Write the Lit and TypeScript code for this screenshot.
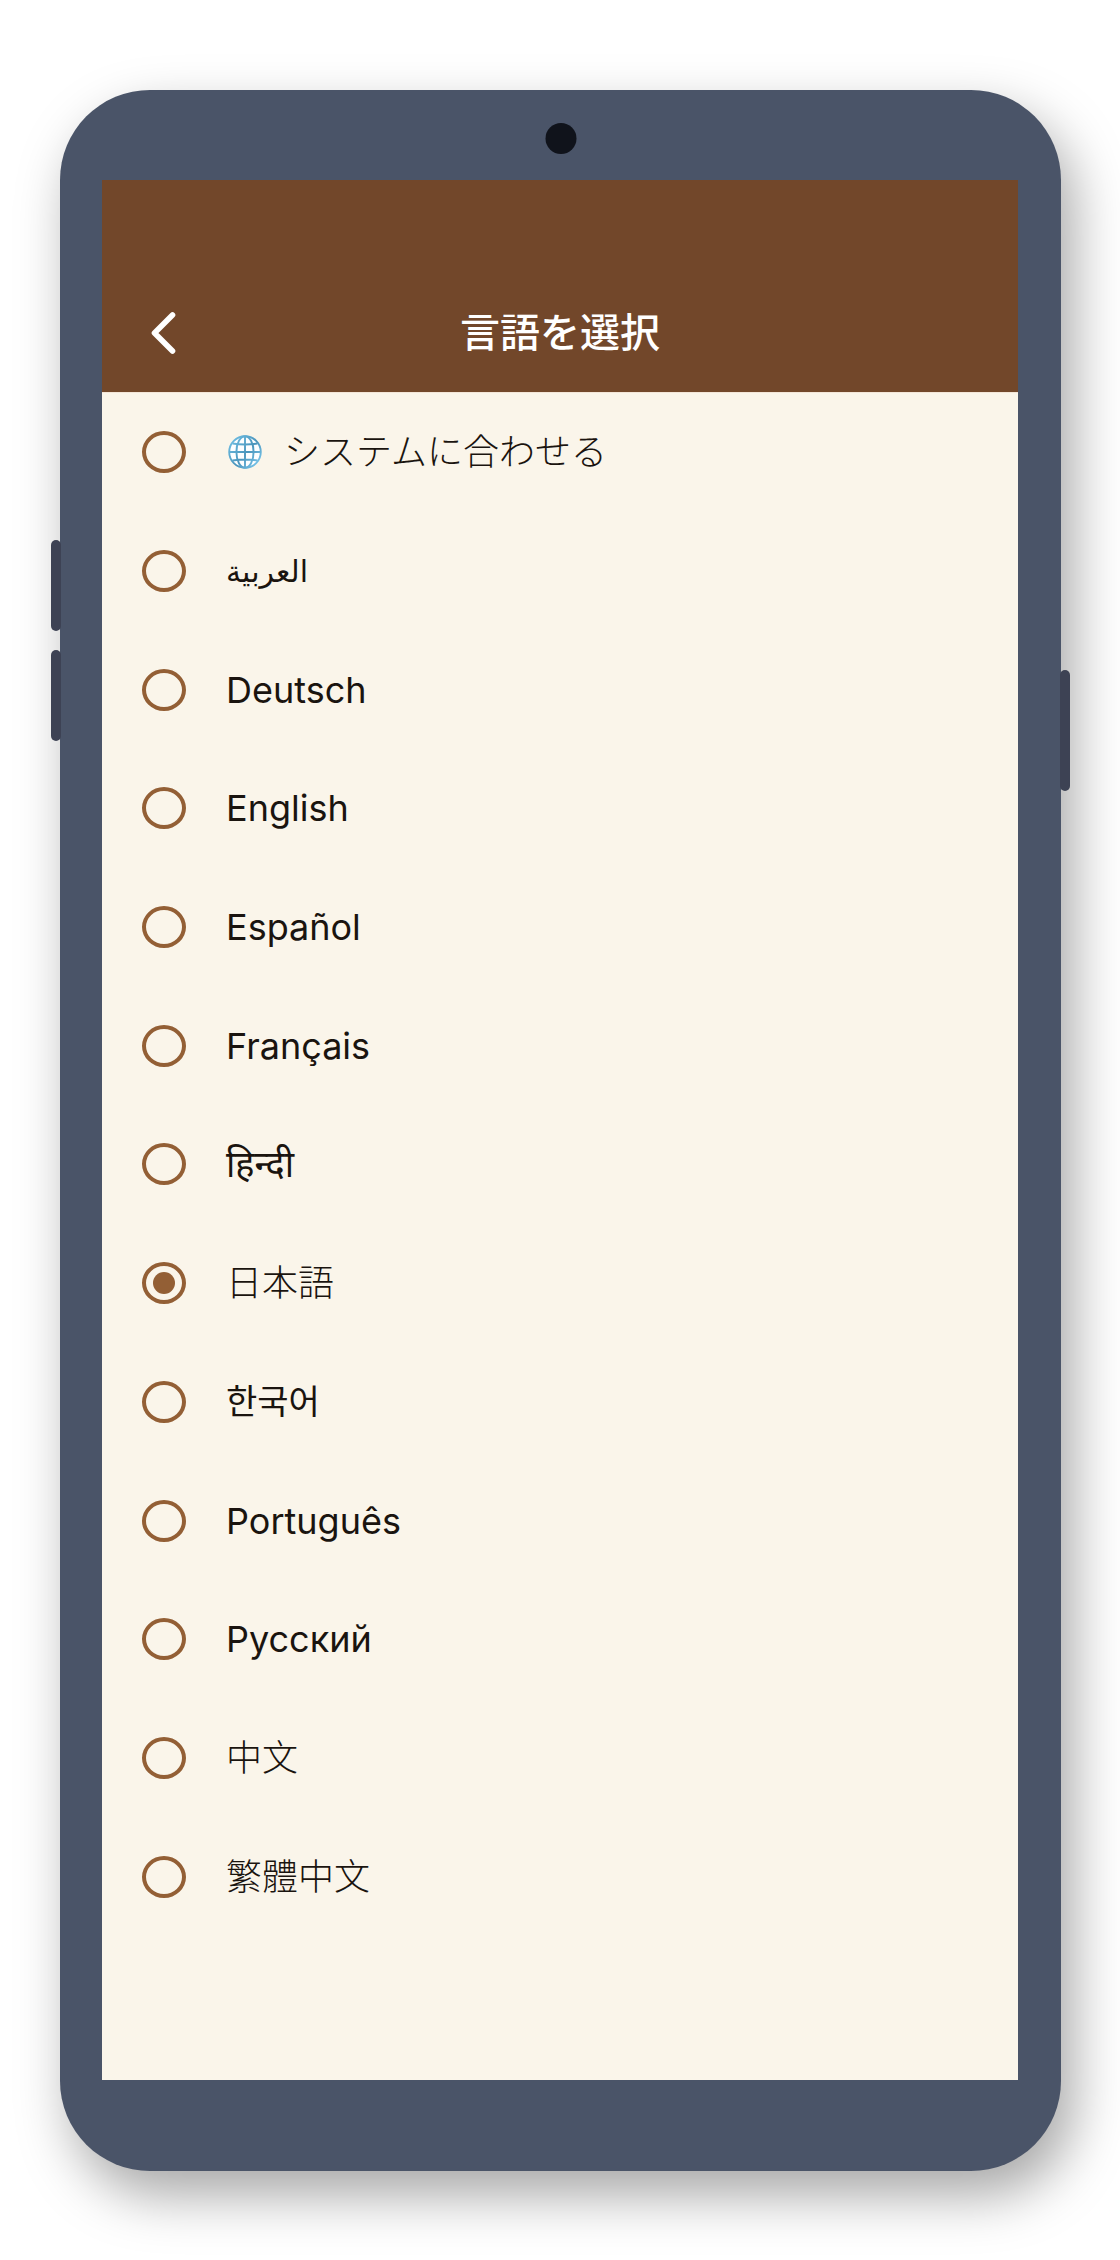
import { LitElement, css, html, nothing, svg } from 'lit'
import { customElement, state } from 'lit/decorators.js'

interface Language {
  code: string
  label: string
}

const LANGUAGES: Language[] = [
  { code: 'system', label: 'システムに合わせる' },
  { code: 'ar', label: 'العربية' },
  { code: 'de', label: 'Deutsch' },
  { code: 'en', label: 'English' },
  { code: 'es', label: 'Español' },
  { code: 'fr', label: 'Français' },
  { code: 'hi', label: 'हिन्दी' },
  { code: 'ja', label: '日本語' },
  { code: 'ko', label: '한국어' },
  { code: 'pt', label: 'Português' },
  { code: 'ru', label: 'Русский' },
  { code: 'zh-Hans', label: '中文' },
  { code: 'zh-Hant', label: '繁體中文' },
]

const globeLines = svg`
  <circle cx="17" cy="17" r="15.8" />
  <ellipse cx="17" cy="17" rx="8.6" ry="15.8" />
  <path d="M17 1v32M1 17h32M4.500 8.500q12.500 2 25 0M4.500 25.500q12.500 -2 25 0" />
`

@customElement('language-picker')
export class LanguagePicker extends LitElement {
  @state()
  private selected = 'ja'

  private select(code: string) {
    this.selected = code
  }

  private renderGlobe() {
    return html`
      <svg class="globe" viewBox="0 0 34 34" aria-hidden="true">
        <defs>
          <linearGradient id="globe-line" gradientUnits="userSpaceOnUse" x1="2" y1="4" x2="32" y2="30">
            <stop offset="0" stop-color="#6fbfe4" />
            <stop offset="0.55" stop-color="#4a94bb" />
            <stop offset="1" stop-color="#7cc9ee" />
          </linearGradient>
        </defs>
        <circle cx="17" cy="17" r="16" fill="#fdfeff" />
        <g fill="none" stroke="url(#globe-line)" stroke-width="1.9">${globeLines}</g>
      </svg>
    `
  }

  protected render() {
    return html`
      <header class="header">
        <button class="back" type="button" aria-label="戻る">
          <svg viewBox="0 0 26 42" aria-hidden="true">
            <path d="M21.500 3L3.500 21L21.500 39" />
          </svg>
        </button>
        <h1 class="title">言語を選択</h1>
      </header>
      <div class="list" role="radiogroup" aria-label="言語を選択">
        ${LANGUAGES.map(
          ({ code, label }) => html`
            <label class="row">
              <input
                class="radio"
                type="radio"
                name="language"
                value=${code}
                .checked=${this.selected === code}
                @change=${() => this.select(code)}
              />
              <span class="label" lang=${code === 'system' ? 'ja' : code}>
                ${code === 'system' ? this.renderGlobe() : nothing}
                <span>${label}</span>
              </span>
            </label>
          `
        )}
      </div>
    `
  }

  static styles = css`
    :host {
      flex: 1;
      display: flex;
      flex-direction: column;
      background: #faf5ea;
      font-family: Inter, 'Noto Sans CJK JP', 'Noto Sans', 'DejaVu Sans', sans-serif;
      color: #1a140f;
    }

    .header {
      display: grid;
      grid-template-columns: 48px 1fr 48px;
      align-items: center;
      padding: 121px 38px 27px;
      background: #72472a;
      border-bottom: 1px solid #f3e6d8;
      color: #fff;
    }

    .back {
      display: flex;
      justify-content: center;
      padding: 11px 0;
      border: 0;
      background: none;
      color: inherit;
      cursor: pointer;
    }

    .back svg {
      width: 26px;
      height: 42px;
      fill: none;
      stroke: currentColor;
      stroke-width: 5.6;
      stroke-linecap: round;
      stroke-linejoin: round;
    }

    .title {
      margin: 0;
      font-size: 40px;
      font-weight: 500;
      line-height: 56px;
      text-align: center;
    }

    .list {
      flex: 1;
      display: grid;
      grid-auto-rows: 1fr;
      padding-bottom: 144px;
    }

    .row {
      display: flex;
      align-items: center;
      gap: 40px;
      padding: 0 40px;
      cursor: pointer;
    }

    .radio {
      appearance: none;
      flex: none;
      display: grid;
      place-items: center;
      box-sizing: border-box;
      width: 44px;
      height: 42px;
      margin: 0;
      border: 4px solid #935f35;
      border-radius: 50%;
      cursor: pointer;
    }

    .radio:checked::before {
      content: '';
      width: 22px;
      height: 22px;
      border-radius: 50%;
      background: #935f35;
    }

    .label {
      display: flex;
      align-items: center;
      gap: 20px;
      font-size: 36px;
      font-weight: 400;
      line-height: 48px;
    }

    .label:lang(ja),
    .label:lang(zh) {
      font-weight: 300;
    }

    .label:lang(ar) {
      font-family: Inter, 'DejaVu Sans', sans-serif;
      font-size: 30px;
    }

    .label:lang(hi) {
      font-family: Inter, 'Noto Sans', sans-serif;
    }

    .label:lang(ko) {
      font-family: Inter, 'Noto Sans CJK KR', sans-serif;
      font-size: 34px;
    }

    .label:lang(zh-Hans) {
      font-family: Inter, 'Noto Sans CJK SC', sans-serif;
    }

    .label:lang(zh-Hant) {
      font-family: Inter, 'Noto Sans CJK TC', sans-serif;
    }

    .globe {
      width: 38px;
      height: 34px;
    }
  `
}

@customElement('app-root')
export class AppRoot extends LitElement {
  protected render() {
    return html`
      <div class="phone">
        <span class="camera"></span>
        <span class="side-key side-key--volume-up"></span>
        <span class="side-key side-key--volume-down"></span>
        <span class="side-key side-key--power"></span>
        <language-picker></language-picker>
      </div>
    `
  }

  static styles = css`
    :host {
      display: flex;
      flex-direction: column;
      box-sizing: border-box;
      min-height: 100vh;
      padding: 90px 59px 89px 60px;
      overflow: hidden;
      background: #fff;
    }

    .phone {
      position: relative;
      flex: 1;
      display: flex;
      flex-direction: column;
      padding: 90px 43px 91px 42px;
      border-radius: 90px;
      background: #4a5468;
      box-shadow: 12px 24px 54px rgba(0, 0, 0, 0.35);
    }

    /* camera and keys sit over the frame */
    .camera {
      position: absolute;
      top: 33px;
      left: 50%;
      width: 31px;
      height: 31px;
      border-radius: 50%;
      background: #10131b;
      transform: translateX(-50%);
    }

    .side-key {
      position: absolute;
      left: -9px;
      width: 10px;
      height: 91px;
      border-radius: 5px;
      background: #3d4254;
    }

    .side-key--volume-up {
      top: 450px;
    }

    .side-key--volume-down {
      top: 560px;
    }

    .side-key--power {
      top: 580px;
      right: -9px;
      left: auto;
      height: 121px;
    }
  `
}

declare global {
  interface HTMLElementTagNameMap {
    'app-root': AppRoot
    'language-picker': LanguagePicker
  }
}
